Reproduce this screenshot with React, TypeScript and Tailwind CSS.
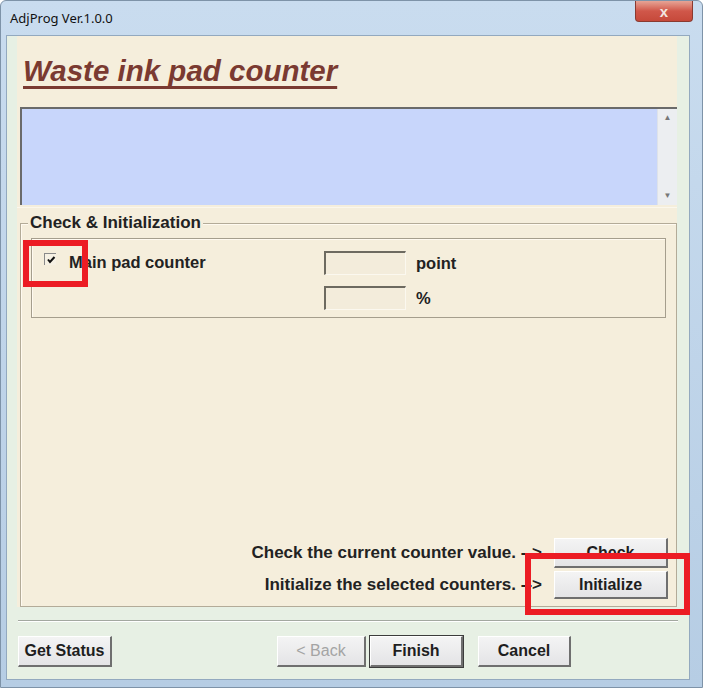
import React from "react";

const sans = { fontFamily: '"Liberation Sans", Arial, sans-serif' };

function WinButton({
  label,
  w,
  h = 31,
  disabled,
  isDefault,
  className = "",
}: {
  label: string;
  w: number;
  h?: number;
  disabled?: boolean;
  isDefault?: boolean;
  className?: string;
}) {
  return (
    <div
      className={`flex items-center justify-center text-[16px] font-bold bg-gradient-to-b from-[#f4f4f4] to-[#e4e4e6] border-t border-l border-t-white border-l-white border-r-2 border-b-2 border-r-[#6f6f6f] border-b-[#6f6f6f] ${
        isDefault ? "outline outline-1 outline-[#3c3c3c]" : ""
      } ${disabled ? "text-[#a4a4a4]" : "text-[#1e1e1e]"} ${className}`}
      style={{ width: w, height: h }}
    >
      {label}
    </div>
  );
}

function Checkbox() {
  return (
    <div className="w-[12px] h-[12px] border-t border-l border-[#8a8a8a] bg-[#f6f1e4] flex items-center justify-center">
      <svg width="10" height="10" viewBox="0 0 10 10">
        <path d="M2 4.5 L4 7 L8.5 2" stroke="#111" strokeWidth="2" fill="none" />
      </svg>
    </div>
  );
}

function Sunken() {
  return (
    <div className="w-[82px] h-[24px] border-t-2 border-l-2 border-[#6d6a60] border-r border-b border-r-[#fbf8ef] border-b-[#fbf8ef] bg-[#f3ecdb]" />
  );
}

export default function App() {
  return (
    <div
      className="relative w-[703px] h-[688px] flex flex-col bg-gradient-to-b from-[#c9dcef] to-[#b6cde4] border border-[#7e93a8] rounded-t-[6px] overflow-hidden"
      style={sans}
    >
      {/* title bar */}
      <div className="h-[34px] flex items-start justify-between">
        <div
          className="pl-[9px] pt-[9px] text-[13px] leading-4 text-[#111]"
          style={{ fontFamily: '"Noto Sans", "Open Sans", sans-serif' }}
        >
          AdjProg Ver.1.0.0
        </div>
        <div className="mr-[9px] w-[58px] h-[21px] rounded-b-[4px] border border-t-0 border-[#8a3a30] bg-gradient-to-b from-[#e6a496] via-[#d0574a] to-[#c6493a] flex items-center justify-center text-[#f3e6e0] font-bold text-[15px] leading-none">
          x
        </div>
      </div>

      {/* client area */}
      <div className="flex-1 ml-[5px] mr-[12px] mb-[7px] bg-[#e7f0e4] border border-[#93a9bf] flex flex-col">
        {/* beige wizard panel */}
        <div className="h-[571px] ml-[10px] mr-[12px] bg-[#f5eedc] flex flex-col">
          <div className="h-[71px] pl-[6px] pt-[19px]">
            <span className="text-[29.5px] leading-[32px] font-bold italic text-[#7a3a31] underline decoration-[3px] underline-offset-[5px] [text-decoration-skip-ink:none]">
              Waste ink pad counter
            </span>
          </div>

          {/* log area */}
          <div className="h-[98px] ml-[3px] bg-[#c8d6fb] border-t-2 border-l-2 border-[#6a6a6a] flex justify-end">
            <div className="w-[20px] bg-[#eceef1] border-l border-[#dde2ea] flex flex-col justify-between items-center py-[3px] text-[8px] text-[#777]">
              <span>▲</span>
              <span>▼</span>
            </div>
          </div>

          <div className="h-[16px] border-t border-[#fbf7ec] mt-[2px]" />

          {/* group box */}
          <div className="flex-1 ml-[3px] border border-[#b3ab98] shadow-[inset_1px_1px_0_#fffaf0] flex flex-col pb-[7px]">
            <div className="-mt-[10px] ml-[7px] self-start bg-[#f5eedc] px-[2px] text-[17px] font-bold leading-[18px] text-[#222]">
              Check &amp; Initialization
            </div>

            <div className="mt-[6px] ml-[10px] mr-[10px] h-[80px] border border-[#a59e8d] shadow-[inset_1px_1px_0_#fffaf0] flex pt-[12px] pl-[12px]">
              <div className="w-[280px] h-[24px] flex items-start pt-[2px]">
                <Checkbox />
                <span className="ml-[13px] -mt-[1px] text-[16.5px] leading-[20px] font-bold text-[#222]">Main pad counter</span>
              </div>
              <div className="flex flex-col gap-[10px]">
                <div className="flex items-center">
                  <Sunken />
                  <span className="ml-[10px] text-[16.5px] font-bold text-[#222]">point</span>
                </div>
                <div className="flex items-center">
                  <Sunken />
                  <span className="ml-[10px] text-[16.5px] font-bold text-[#222]">%</span>
                </div>
              </div>
            </div>

            <div className="flex-1" />

            <div className="flex flex-col items-end mr-[8px] gap-[3px]">
              <div className="flex items-center">
                <span className="text-[17px] font-bold text-[#222]">Check the current counter value. --&gt;</span>
                <WinButton label="Check" w={114} h={30} className="ml-[12px]" />
              </div>
              <div className="flex items-center">
                <span className="text-[17px] font-bold text-[#222]">Initialize the selected counters. --&gt;</span>
                <WinButton label="Initialize" w={114} h={28} className="ml-[12px]" />
              </div>
            </div>
          </div>
        </div>

        {/* separator */}
        <div className="mt-[13px] mx-[11px] border-t border-b border-t-[#a3a8a0] border-b-white" />

        {/* footer buttons */}
        <div className="mt-[14px] flex items-center pl-[11px]">
          <WinButton label="Get Status" w={94} />
          <WinButton label="< Back" w={89} disabled className="ml-[165px] font-normal" />
          <WinButton label="Finish" w={93} isDefault className="ml-[4px]" />
          <WinButton label="Cancel" w={93} className="ml-[15px]" />
        </div>
      </div>

      {/* red highlight marks */}
      <div className="absolute left-[22px] top-[239px] w-[65px] h-[47px] border-[6px] border-[#ec1c24]" />
      <div className="absolute left-[524px] top-[552px] w-[165px] h-[62px] border-[6px] border-[#ec1c24]" />
    </div>
  );
}
